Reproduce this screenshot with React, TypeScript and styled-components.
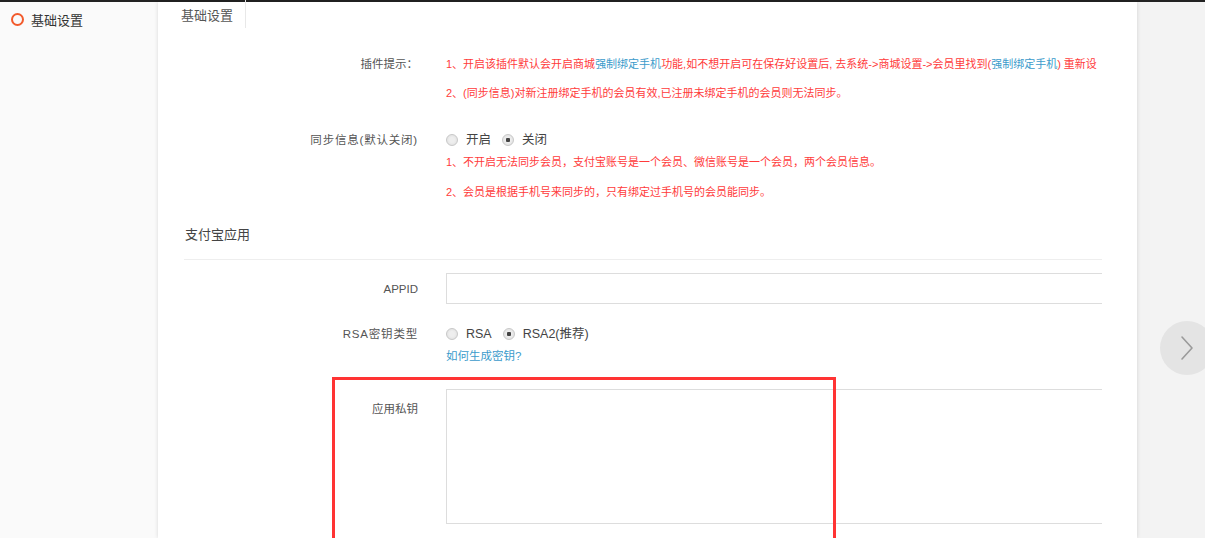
import styled, { createGlobalStyle } from "styled-components";

const GlobalStyle = createGlobalStyle`
  html, body {
    margin: 0;
    padding: 0;
    height: 100%;
    overflow: hidden;
  }
  body {
    font-family: "Liberation Sans", "Noto Sans CJK SC", sans-serif;
    color: #333;
    background: #fff;
  }
`;

const App: React.FC = () => {
  return (
    <>
      <GlobalStyle />
      <Page>
        <TopLine />
        <Body>
          <Sidebar>
            <MenuItem>
              <MenuDot />
              <span>{"基础设置"}</span>
            </MenuItem>
          </Sidebar>

          <Panel>
            <TabBar>
              <Tab>{"基础设置"}</Tab>
            </TabBar>

            <Content>
              <Row $top={26}>
                <Label>{"插件提示："}</Label>
                <Field>
                  <Note>
                    {"1、开启该插件默认会开启商城"}
                    <Link>{"强制绑定手机"}</Link>
                    {"功能,如不想开启可在保存好设置后, 去系统->商城设置->会员里找到("}
                    <Link>{"强制绑定手机"}</Link>
                    {") 重新设"}
                  </Note>
                  <Note $gap={9}>
                    {"2、(同步信息)对新注册绑定手机的会员有效,已注册未绑定手机的会员则无法同步。"}
                  </Note>
                </Field>
              </Row>

              <Row $top={27}>
                <Label $wide>{"同步信息(默认关闭)"}</Label>
                <Field>
                  <RadioGroup>
                    <RadioOption>
                      <Radio />
                      {"开启"}
                    </RadioOption>
                    <RadioOption>
                      <Radio $checked />
                      {"关闭"}
                    </RadioOption>
                  </RadioGroup>
                  <Note $gap={2}>
                    {"1、不开启无法同步会员，支付宝账号是一个会员、微信账号是一个会员，两个会员信息。"}
                  </Note>
                  <Note $gap={10}>
                    {"2、会员是根据手机号来同步的，只有绑定过手机号的会员能同步。"}
                  </Note>
                </Field>
              </Row>

              <SectionTitle>{"支付宝应用"}</SectionTitle>

              <Row $top={13} $center>
                <Label>{"APPID"}</Label>
                <Field>
                  <Input />
                </Field>
              </Row>

              <Row $top={20}>
                <Label $wide>{"RSA密钥类型"}</Label>
                <Field>
                  <RadioGroup>
                    <RadioOption>
                      <Radio />
                      {"RSA"}
                    </RadioOption>
                    <RadioOption>
                      <Radio $checked />
                      {"RSA2(推荐)"}
                    </RadioOption>
                  </RadioGroup>
                  <HelpLink>{"如何生成密钥?"}</HelpLink>
                </Field>
              </Row>

              <Row $top={23}>
                <Label $pad={10}>{"应用私钥"}</Label>
                <Field>
                  <TextArea />
                </Field>
              </Row>

              <Highlight />
            </Content>
          </Panel>

          <Gutter>
            <NextButton>
              <svg width="14" height="26" viewBox="0 0 14 26" fill="none">
                <path
                  d="M2 2 L12 13 L2 24"
                  stroke="#9a9a9a"
                  strokeWidth="1.6"
                  strokeLinecap="round"
                  strokeLinejoin="round"
                />
              </svg>
            </NextButton>
          </Gutter>
        </Body>
      </Page>
    </>
  );
};

const Page = styled.div`
  height: 100vh;
  display: flex;
  flex-direction: column;
`;

const TopLine = styled.div`
  height: 2px;
  background: #222;
  flex-shrink: 0;
`;

const Body = styled.div`
  flex: 1;
  display: flex;
  min-height: 0;
`;

const Sidebar = styled.div`
  width: 158px;
  flex-shrink: 0;
  background: #fafafa;
  padding-top: 8px;
`;

const MenuItem = styled.div`
  display: flex;
  align-items: center;
  gap: 7px;
  padding-left: 11px;
  height: 18px;
  font-size: 13px;
  color: #333;
`;

const MenuDot = styled.span`
  width: 9px;
  height: 9px;
  border: 2.5px solid #f25a2c;
  border-radius: 50%;
`;

const Panel = styled.div`
  width: 979px;
  flex-shrink: 0;
  background: #fff;
  box-shadow: 0 0 4px rgba(0, 0, 0, 0.14);
  position: relative;
  z-index: 1;
`;

const TabBar = styled.div`
  display: flex;
  padding-left: 12px;
  height: 26px;
`;

const Tab = styled.div`
  display: flex;
  align-items: center;
  padding: 0 12px 0 11px;
  font-size: 13px;
  color: #555;
  border-right: 1px solid #e8e8e8;
  margin-top: -2px;
`;

const Content = styled.div`
  position: relative;
  width: 918px;
  margin-left: 26px;
  overflow: hidden;
  height: 520px;
`;

const Row = styled.div<{ $top: number; $center?: boolean }>`
  display: grid;
  grid-template-columns: 234px 1fr;
  column-gap: 28px;
  align-items: ${({ $center }) => ($center ? "center" : "start")};
  margin-top: ${({ $top }) => $top}px;
`;

const Label = styled.div<{ $pad?: number; $wide?: boolean }>`
  text-align: right;
  font-size: 11.5px;
  line-height: 20px;
  color: #555;
  white-space: nowrap;
  letter-spacing: ${({ $wide }) => ($wide ? "0.8px" : "0")};
  padding-top: ${({ $pad }) => $pad ?? 0}px;
`;

const Field = styled.div`
  display: flex;
  flex-direction: column;
  min-width: 0;
`;

const Note = styled.div<{ $gap?: number }>`
  font-size: 11px;
  line-height: 20px;
  color: #ff3b3b;
  white-space: nowrap;
  margin-top: ${({ $gap }) => $gap ?? 0}px;
`;

const Link = styled.span`
  color: #3c9bcb;
`;

const RadioGroup = styled.div`
  display: flex;
  gap: 11px;
  height: 20px;
  align-items: center;
`;

const RadioOption = styled.label`
  display: flex;
  align-items: center;
  gap: 8px;
  font-size: 12.5px;
  line-height: 18px;
  color: #444;
`;

const Radio = styled.span<{ $checked?: boolean }>`
  width: 10px;
  height: 10px;
  border-radius: 50%;
  border: 1px solid #c8c8c8;
  background: radial-gradient(
    circle,
    ${({ $checked }) => ($checked ? "#444 0 2px, " : "")}#eee 2.5px,
    #dcdcdc 100%
  );
`;

const SectionTitle = styled.div`
  margin-top: 23px;
  padding: 0 0 14px 1px;
  font-size: 13px;
  line-height: 20px;
  color: #444;
  border-bottom: 1px solid #eee;
`;

const Input = styled.div`
  height: 29px;
  border: 1px solid #ddd;
  border-right: none;
`;

const HelpLink = styled.div`
  margin-top: 2px;
  font-size: 11.5px;
  line-height: 20px;
  color: #3c9bcb;
`;

const TextArea = styled.div`
  height: 133px;
  border: 1px solid #ddd;
  border-right: none;
`;

const Highlight = styled.div`
  position: absolute;
  left: 148px;
  top: 349px;
  width: 498px;
  height: 200px;
  border: 3px solid #f33;
`;

const Gutter = styled.div`
  flex: 1;
  background: #f3f3f3;
  position: relative;
`;

const NextButton = styled.div`
  position: absolute;
  left: 23px;
  top: 319px;
  width: 54px;
  height: 54px;
  border-radius: 50%;
  background: #e4e4e4;
  display: flex;
  align-items: center;
  padding-left: 20px;
  box-sizing: border-box;
`;

export default App;
